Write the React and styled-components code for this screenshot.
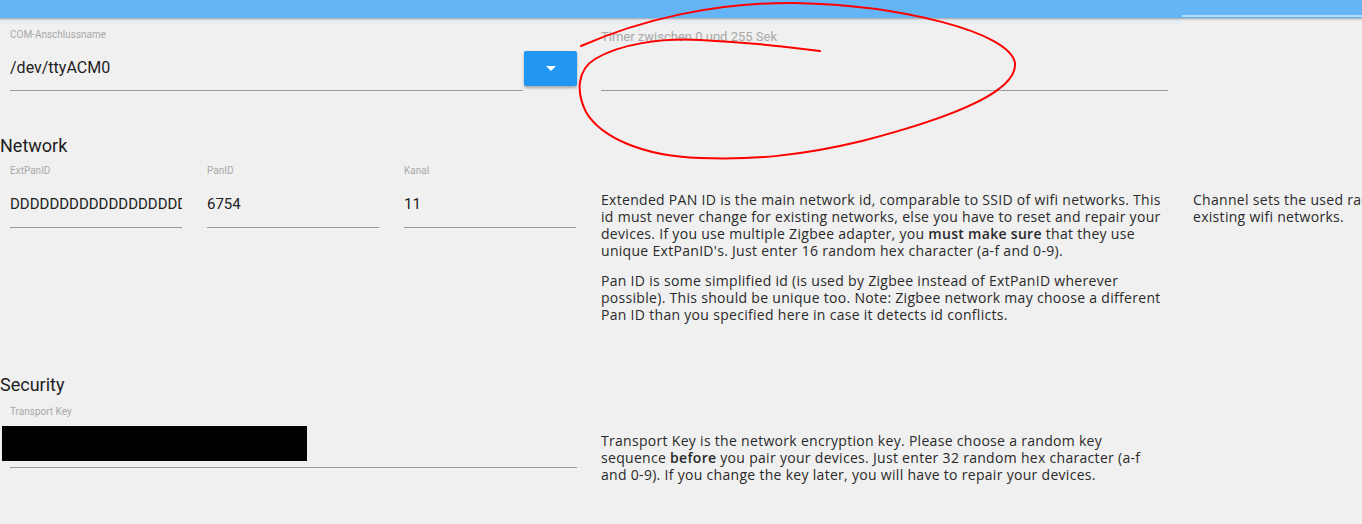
import styled, { createGlobalStyle } from "styled-components";

const GlobalStyle = createGlobalStyle`
  html, body {
    margin: 0;
    padding: 0;
    background: #f0f0f0;
    overflow: hidden;
  }
  body {
    font-family: Roboto, "Liberation Sans", sans-serif;
  }
`;

//Zigbee 설정 페이지
function App() {
  return (
    <>
      <GlobalStyle />
      <Page>
        <TopBar>
          <TabIndicator />
        </TopBar>
        <TabStrip />

        <Grid>
          <Cell $top={5}>
            <SelectRow>
              <Field>
                <Label>COM-Anschlussname</Label>
                <InputBox $top={17} $bottom={12}>
                  <Value $size={16}>/dev/ttyACM0</Value>
                </InputBox>
              </Field>
              <DropButton>
                <Caret />
              </DropButton>
            </SelectRow>
          </Cell>
          <Cell $pad={0} $top={5} $right={25}>
            <Field>
              <Label $size={13}>Timer zwischen 0 und 255 Sek</Label>
              <InputBox $top={25} $bottom={0}>
                <Value $size={16}>&nbsp;</Value>
              </InputBox>
            </Field>
          </Cell>
          <Cell />
        </Grid>

        <Heading $top={44}>Network</Heading>
        <Grid>
          <Cell $top={8}>
            <FieldRow>
              <Field>
                <Label>ExtPanID</Label>
                <InputBox $top={17} $bottom={13}>
                  <Value>DDDDDDDDDDDDDDDDDDDD</Value>
                </InputBox>
              </Field>
              <Field>
                <Label>PanID</Label>
                <InputBox $top={17} $bottom={13}>
                  <Value>6754</Value>
                </InputBox>
              </Field>
              <Field>
                <Label>Kanal</Label>
                <InputBox $top={17} $bottom={13}>
                  <Value>11</Value>
                </InputBox>
              </Field>
            </FieldRow>
          </Cell>
          <Help $top={34}>
            <p>
              Extended PAN ID is the main network id, comparable to SSID of wifi
              networks. This id must never change for existing networks, else
              you have to reset and repair your devices. If you use multiple
              Zigbee adapter, you <b>must make sure</b> that they use unique
              ExtPanID's. Just enter 16 random hex character (a-f and 0-9).
            </p>
            <p>
              Pan ID is some simplified id (is used by Zigbee instead of
              ExtPanID wherever possible). This should be unique too. Note:
              Zigbee network may choose a different Pan ID than you specified
              here in case it detects id conflicts.
            </p>
          </Help>
          <Help $top={34} $nowrap>
            <p>
              Channel sets the used radio channel. Choose one that does not clash with
              <br />
              existing wifi networks.
            </p>
          </Help>
        </Grid>

        <Heading $top={38}>Security</Heading>
        <Grid>
          <Cell $top={10}>
            <Field>
              <Label>Transport Key</Label>
              <InputBox $top={17} $bottom={12}>
                <Value>&nbsp;</Value>
                <Redacted />
              </InputBox>
            </Field>
          </Cell>
          <Help $top={36} $width={540}>
            <p>
              Transport Key is the network encryption key. Please choose a
              random key sequence <b>before</b> you pair your devices. Just enter
              32 random hex character (a-f and 0-9). If you change the key later,
              you will have to repair your devices.
            </p>
          </Help>
          <Cell />
        </Grid>

        <Annotation viewBox="0 0 1362 524" width="1362" height="524">
          <path
            d="M581,46 C640,20 715,2 795,3 C900,5 1010,32 1015,63 C1018,95 935,122 862,141 C800,156 752,160 700,158 C640,156 600,136 586,112 C576,92 577,70 595,59 C620,44 660,38 700,40 C742,42 790,47 820,51"
            fill="none"
            stroke="#f00"
            strokeWidth="2"
            strokeLinecap="round"
          />
        </Annotation>
      </Page>
    </>
  );
}

const Page = styled.div`
  position: relative;
  width: 1362px;
  height: 524px;
  overflow: hidden;
`;

const TopBar = styled.div`
  position: relative;
  height: 18px;
  background: #64b5f6;
  box-shadow: 0 1px 2px rgba(0, 0, 0, 0.35);
`;

const TabIndicator = styled.div`
  position: absolute;
  right: 0;
  bottom: 1px;
  width: 180px;
  height: 2px;
  background: #b3dbfb;
`;

const TabStrip = styled.div`
  width: 1182px;
  height: 6px;
  background: #e8edf3;
`;

const Grid = styled.div`
  display: grid;
  grid-template-columns: 601px 592px 1fr;
  align-items: start;
`;

const Cell = styled.div`
  padding-left: ${(p) => p.$pad ?? 10}px;
  padding-right: ${(p) => p.$right ?? 24}px;
  padding-top: ${(p) => p.$top ?? 0}px;
  min-width: 0;
`;

const SelectRow = styled.div`
  display: flex;
  align-items: flex-end;
`;

const FieldRow = styled.div`
  display: grid;
  grid-template-columns: repeat(3, 172px);
  column-gap: 25px;
`;

const Field = styled.div`
  display: flex;
  flex-direction: column;
  flex: 1;
  min-width: 0;
`;

const Label = styled.div`
  font-size: ${(p) => p.$size ?? 10}px;
  line-height: ${(p) => (p.$size ? 16 : 12)}px;
  color: #a8a8a8;
`;

const InputBox = styled.div`
  position: relative;
  padding-top: ${(p) => p.$top}px;
  padding-bottom: ${(p) => p.$bottom}px;
  border-bottom: 1px solid #9a9a9a;
`;

const Value = styled.div`
  font-size: ${(p) => p.$size ?? 15}px;
  line-height: 20px;
  color: #222;
  white-space: nowrap;
  overflow: hidden;
`;

const Redacted = styled.div`
  position: absolute;
  left: -8px;
  top: 8px;
  width: 305px;
  height: 35px;
  background: #000;
`;

const DropButton = styled.button`
  width: 53px;
  height: 35px;
  margin-left: 1px;
  margin-bottom: 5px;
  border: none;
  border-radius: 2px;
  background: #2196f3;
  box-shadow: 0 2px 3px rgba(0, 0, 0, 0.3);
  display: flex;
  align-items: center;
  justify-content: center;
  padding: 0;
`;

const Caret = styled.span`
  width: 0;
  height: 0;
  border-left: 5px solid transparent;
  border-right: 5px solid transparent;
  border-top: 5px solid #fff;
`;

const Heading = styled.h2`
  margin: ${(p) => p.$top}px 0 0 0;
  font-size: 18px;
  line-height: 22px;
  font-weight: 400;
  color: #1e1e1e;
`;

const Help = styled.div`
  padding-top: ${(p) => p.$top}px;
  padding-right: 25px;
  max-width: ${(p) => (p.$width ? `${p.$width}px` : "none")};
  font-family: "Open Sans", sans-serif;
  font-size: 14px;
  letter-spacing: 0.3px;
  line-height: 17px;
  color: #2a2a2a;
  white-space: ${(p) => (p.$nowrap ? "nowrap" : "normal")};
  p {
    margin: 0 0 13px 0;
  }
  b {
    font-weight: 600;
  }
`;

const Annotation = styled.svg`
  position: absolute;
  left: 0;
  top: 0;
  pointer-events: none;
`;

export default App;
